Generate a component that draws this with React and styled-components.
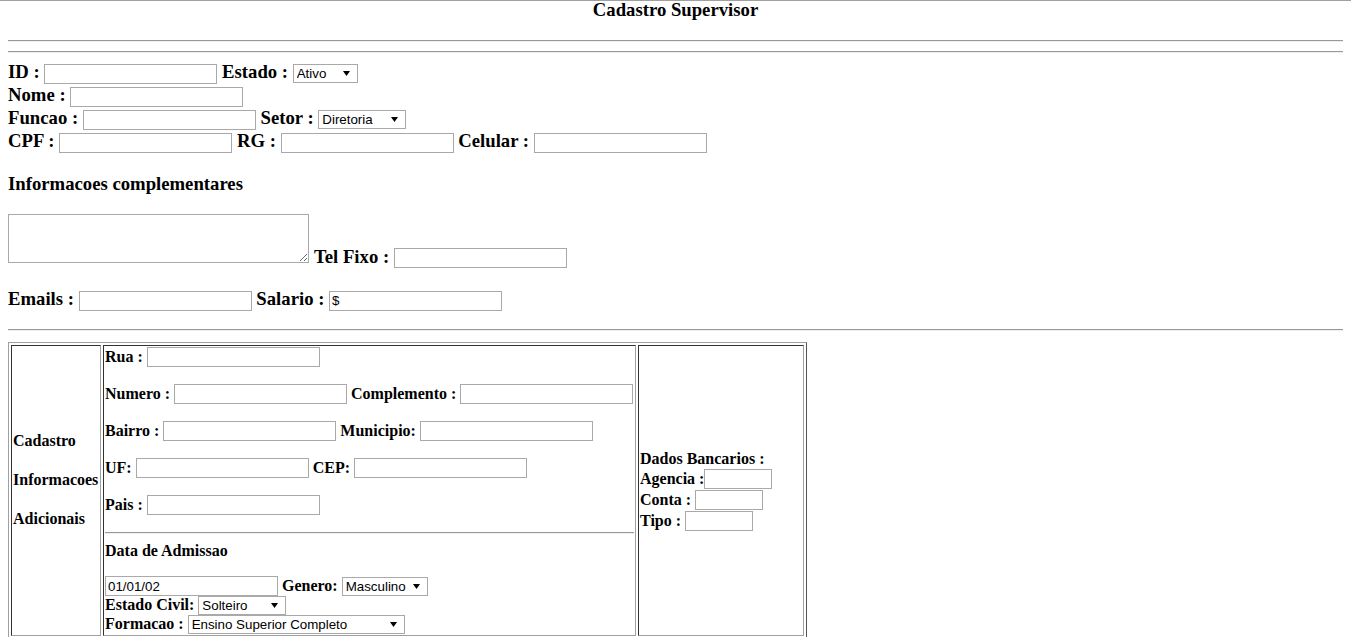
import React from 'react';
import styled, { createGlobalStyle } from 'styled-components';

const GlobalStyle = createGlobalStyle`
  html, body {
    margin: 0;
    padding: 0;
    background: #fff;
  }
  body {
    font-family: "Liberation Serif", "Times New Roman", serif;
    color: #000;
  }
`;

const Page = styled.div`
  border-top: 1px solid #a0a0a0;
  padding: 0 8px;
`;

const Title = styled.h3`
  margin: 0;
  font-size: 18.72px;
  line-height: 18px;
  font-weight: bold;
  text-align: center;
`;

const Rule = styled.hr`
  height: 0;
  border: 0;
  border-top: 1px solid #9a9a9a;
  border-bottom: 1px solid #eeeeee;
  margin: ${({ $margin }) => $margin || '0'};
`;

const Row = styled.div`
  display: flex;
  align-items: baseline;
  gap: ${({ $gap }) => ($gap ?? 4.68)}px;
  height: ${({ $h }) => ($h ? `${$h}px` : 'auto')};
  margin-top: ${({ $mt }) => $mt || 0}px;
`;

const AreaRow = styled.div`
  display: flex;
  align-items: flex-end;
  gap: 5px;
`;

const Label = styled.span`
  font-weight: bold;
  font-size: ${({ $small }) => ($small ? '16px' : '18.72px')};
  line-height: ${({ $small }) => ($small ? '18px' : '22px')};
  white-space: nowrap;
`;

const SectionTitle = styled.h3`
  margin: 20px 0 19px;
  font-size: 18.72px;
  line-height: 22px;
  font-weight: bold;
`;

const TextInput = styled.input`
  box-sizing: border-box;
  width: ${({ $w }) => $w || 173}px;
  height: 20px;
  margin: 0;
  padding: 1px 2px;
  border: 1px solid #a9a9a9;
  border-radius: 0;
  background: #fff;
  color: #000;
  font: 13.33px "Liberation Sans", Arial, sans-serif;
  outline: none;
`;

const NotesArea = styled.textarea`
  box-sizing: border-box;
  width: 301px;
  height: 49px;
  margin: 0 0 5px;
  padding: 2px;
  border: 1px solid #a9a9a9;
  border-radius: 0;
  font: 13.33px "Liberation Mono", monospace;
  resize: both;
  outline: none;
`;

const SelectWrap = styled.span`
  position: relative;
  display: inline-flex;
  width: ${({ $w }) => $w}px;
`;

const NativeSelect = styled.select`
  appearance: none;
  -webkit-appearance: none;
  box-sizing: border-box;
  width: 100%;
  height: 19px;
  margin: 0;
  padding: 0 16px 0 3px;
  border: 1px solid #a9a9a9;
  border-radius: 0;
  background: #fff;
  color: #000;
  font: 13.33px "Liberation Sans", Arial, sans-serif;
  outline: none;
`;

const Caret = styled.svg`
  position: absolute;
  right: 8px;
  top: 7px;
  width: 7px;
  height: 5px;
  pointer-events: none;
`;

const Select = ({ w, value }) => (
  <SelectWrap $w={w}>
    <NativeSelect defaultValue={value}>
      <option>{value}</option>
    </NativeSelect>
    <Caret viewBox="0 0 7 5">
      <path d="M0 0 H7 L3.5 5 Z" fill="#000" />
    </Caret>
  </SelectWrap>
);

const Grid = styled.div`
  display: grid;
  grid-template-columns: 90px 533px 166px;
  gap: 2px;
  padding: 2px;
  width: max-content;
  margin-top: 11px;
  border: 1px solid;
  border-color: #a0a0a0 #555 #555 #a0a0a0;
`;

const Cell = styled.div`
  box-sizing: border-box;
  display: flex;
  flex-direction: column;
  justify-content: ${({ $middle }) => ($middle ? 'center' : 'flex-start')};
  padding: 1px;
  border: 1px solid;
  border-color: #333 #a0a0a0 #a0a0a0 #333;
`;

const SideStack = styled.div`
  display: flex;
  flex-direction: column;
  gap: 21px;
  padding-bottom: 21px;
`;

const AddressStack = styled.div`
  display: flex;
  flex-direction: column;
  gap: 17px;
`;

const SubTitle = styled.div`
  margin: 8px 0 16px;
  font-weight: bold;
  font-size: 16px;
  line-height: 18px;
`;

const BankStack = styled.div`
  display: flex;
  flex-direction: column;
  gap: 1px;
`;

const Field = ({ label, small, w, value }) => (
  <>
    <Label $small={small}>{label}</Label>
    <TextInput $w={w} defaultValue={value} />
  </>
);

export default function App() {
  return (
    <Page>
      <GlobalStyle />
      <Title>Cadastro Supervisor</Title>
      <Rule $margin="21px 0 0" />
      <Rule $margin="9px 0 8px" />

      <Row $h={23}>
        <Field label="ID :" />
        <Label>Estado :</Label>
        <Select w={65} value="Ativo" />
      </Row>
      <Row $h={23}>
        <Field label="Nome :" />
      </Row>
      <Row $h={23}>
        <Field label="Funcao :" />
        <Label>Setor :</Label>
        <Select w={88} value="Diretoria" />
      </Row>
      <Row $h={23}>
        <Field label="CPF :" />
        <Field label="RG :" />
        <Field label="Celular :" />
      </Row>

      <SectionTitle>Informacoes complementares</SectionTitle>
      <AreaRow>
        <NotesArea />
        <Row>
          <Field label="Tel Fixo :" />
        </Row>
      </AreaRow>
      <Row $mt={20} $h={23}>
        <Field label="Emails :" />
        <Field label="Salario :" value="$" />
      </Row>

      <Rule $margin="18px 0 0" />

      <Grid>
        <Cell $middle>
          <SideStack>
            <Label $small>Cadastro</Label>
            <Label $small>Informacoes</Label>
            <Label $small>Adicionais</Label>
          </SideStack>
        </Cell>

        <Cell>
          <AddressStack>
            <Row $gap={4} $h={20}>
              <Field small label="Rua :" />
            </Row>
            <Row $gap={4} $h={20}>
              <Field small label="Numero :" />
              <Field small label="Complemento :" />
            </Row>
            <Row $gap={4} $h={20}>
              <Field small label="Bairro :" />
              <Field small label="Municipio:" />
            </Row>
            <Row $gap={4} $h={20}>
              <Field small label="UF:" />
              <Field small label="CEP:" />
            </Row>
            <Row $gap={4} $h={20}>
              <Field small label="Pais :" />
            </Row>
          </AddressStack>
          <Rule $margin="17px 0 0" />
          <SubTitle>Data de Admissao</SubTitle>
          <Row $gap={4} $h={20}>
            <TextInput defaultValue="01/01/02" />
            <Label $small>Genero:</Label>
            <Select w={86} value="Masculino" />
          </Row>
          <Row $gap={4} $h={19}>
            <Label $small>Estado Civil:</Label>
            <Select w={88} value="Solteiro" />
          </Row>
          <Row $gap={4} $h={19}>
            <Label $small>Formacao :</Label>
            <Select w={217} value="Ensino Superior Completo" />
          </Row>
        </Cell>

        <Cell $middle>
          <BankStack>
            <Label $small>Dados Bancarios :</Label>
            <Row $gap={0} $h={20}>
              <Field small label="Agencia :" w={68} />
            </Row>
            <Row $gap={4} $h={20}>
              <Field small label="Conta :" w={68} />
            </Row>
            <Row $gap={4} $h={20}>
              <Field small label="Tipo :" w={68} />
            </Row>
          </BankStack>
        </Cell>
      </Grid>
    </Page>
  );
}
